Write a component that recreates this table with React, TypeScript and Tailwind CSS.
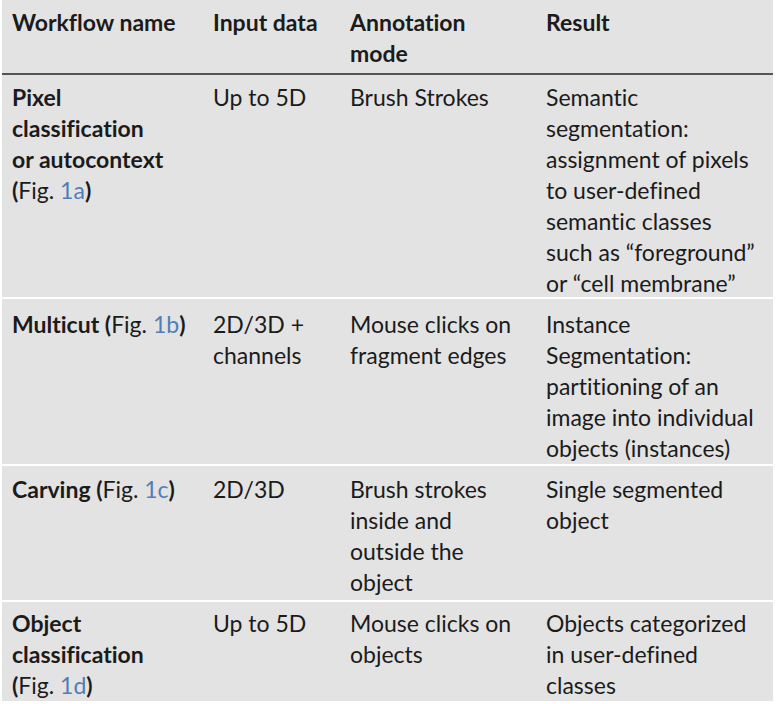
import React from 'react';

type Cell = React.ReactNode[];

interface Row {
  height: string;
  pad: string;
  cells: [Cell, Cell, Cell, Cell];
}

const Fig = ({ n }: { n: string }) => (
  <span className="font-bold">
    (<span className="font-normal">Fig. </span>
    <span className="font-normal text-[#4f7fb5]">{n}</span>)
  </span>
);

const rows: Row[] = [
  {
    height: 'h-[224px]',
    pad: 'pt-[7px]',
    cells: [
      [<b key="a">Pixel</b>, <b key="b">classification</b>, <b key="c">or autocontext</b>, <Fig key="d" n="1a" />],
      ['Up to 5D'],
      ['Brush Strokes'],
      [
        'Semantic',
        'segmentation:',
        'assignment of pixels',
        'to user-defined',
        'semantic classes',
        'such as \u201cforeground\u201d',
        'or \u201ccell membrane\u201d',
      ],
    ],
  },
  {
    height: 'h-[167px]',
    pad: 'pt-[10px]',
    cells: [
      [
        <span key="a">
          <b>Multicut </b>
          <Fig n="1b" />
        </span>,
      ],
      ['2D/3D +', 'channels'],
      ['Mouse clicks on', 'fragment edges'],
      ['Instance', 'Segmentation:', 'partitioning of an', 'image into individual', 'objects (instances)'],
    ],
  },
  {
    height: 'h-[136px]',
    pad: 'pt-[8px]',
    cells: [
      [
        <span key="a">
          <b>Carving </b>
          <Fig n="1c" />
        </span>,
      ],
      ['2D/3D'],
      ['Brush strokes', 'inside and', 'outside the', 'object'],
      ['Single segmented', 'object'],
    ],
  },
  {
    height: 'h-[99px]',
    pad: 'pt-[6px]',
    cells: [
      [<b key="a">Object</b>, <b key="b">classification</b>, <Fig key="c" n="1d" />],
      ['Up to 5D'],
      ['Mouse clicks on', 'objects'],
      ['Objects categorized', 'in user-defined', 'classes'],
    ],
  },
];

const cols = 'grid grid-cols-[201px_137px_196px_237px]';

function Lines({ lines }: { lines: Cell }) {
  return (
    <div className="pl-[10px]">
      {lines.map((l, i) => (
        <div key={i} className="whitespace-nowrap">
          {l}
        </div>
      ))}
    </div>
  );
}

export default function App() {
  return (
    <div className="h-[704px] w-[778px] bg-white pl-[2px] text-[23px] leading-[31px] text-[#1b1b1b] [font-variant-ligatures:none] [font-family:Lato,'Liberation_Sans',sans-serif]">
      <div className="w-[771px] bg-[#e3e3e3]">
        {/* header */}
        <div className={`${cols} h-[75px] border-b-2 border-[#555555] pt-[7px] font-bold`}>
          <Lines lines={['Workflow name']} />
          <Lines lines={['Input data']} />
          <Lines lines={['Annotation', 'mode']} />
          <Lines lines={['Result']} />
        </div>
        {rows.map((r, i) => (
          <div
            key={i}
            className={`${cols} ${r.height} ${r.pad} ${i < rows.length - 1 ? 'border-b-2 border-white' : ''}`}
          >
            {r.cells.map((c, j) => (
              <Lines key={j} lines={c} />
            ))}
          </div>
        ))}
      </div>
    </div>
  );
}
